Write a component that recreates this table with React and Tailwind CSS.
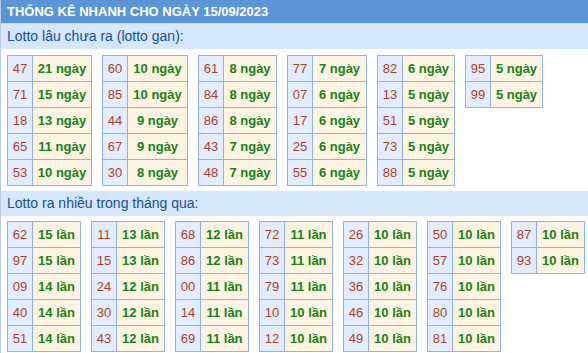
import React from "react";

const gan = [
  { w: 85, rows: [["47", "21"], ["71", "15"], ["18", "13"], ["65", "11"], ["53", "10"]] },
  { w: 86, rows: [["60", "10"], ["85", "10"], ["44", "9"], ["67", "9"], ["30", "8"]] },
  { w: 79, rows: [["61", "8"], ["84", "8"], ["86", "8"], ["43", "7"], ["48", "7"]] },
  { w: 80, rows: [["77", "7"], ["07", "6"], ["17", "6"], ["25", "6"], ["55", "6"]] },
  { w: 78, rows: [["82", "6"], ["13", "5"], ["51", "5"], ["73", "5"], ["88", "5"]] },
  { w: 78, rows: [["95", "5"], ["99", "5"]] },
];

const nhieu = [
  [["62", "15"], ["97", "15"], ["09", "14"], ["40", "14"], ["51", "14"]],
  [["11", "13"], ["15", "13"], ["24", "12"], ["30", "12"], ["43", "12"]],
  [["68", "12"], ["86", "12"], ["00", "11"], ["14", "11"], ["69", "11"]],
  [["72", "11"], ["73", "11"], ["79", "11"], ["10", "10"], ["12", "10"]],
  [["26", "10"], ["32", "10"], ["36", "10"], ["46", "10"], ["49", "10"]],
  [["50", "10"], ["57", "10"], ["76", "10"], ["80", "10"], ["81", "10"]],
  [["87", "10"], ["93", "10"]],
];

function Table({ width, rows, unit }) {
  return (
    <div
      className="border-l border-t border-[#8fb1ee] self-start shrink-0"
      style={{ width }}
    >
      {rows.map(([n, v], i) => (
        <div key={i} className="flex h-[26px]">
          <div className="w-[25px] shrink-0 border-r border-b border-[#8fb1ee] bg-[#e1edfd] text-[#b23e20] text-[13px] leading-[25px] text-center">
            {n}
          </div>
          <div className="flex-1 border-r border-b border-[#8fb1ee] bg-[#fdf3e3] text-[#148414] font-bold text-[13px] leading-[25px] text-center">
            {v} {unit}
          </div>
        </div>
      ))}
    </div>
  );
}

export default function App() {
  return (
    <div className="w-[588px] h-[353px] overflow-hidden bg-white border-l border-[#b9cbe3] font-['Liberation_Sans',Arial,sans-serif]">
      <div className="h-[24px] bg-[#5b95d7] border-b border-[#c9d9ec] text-white font-bold text-[13px] leading-[23px] pl-[6px]">
        THỐNG KÊ NHANH CHO NGÀY 15/09/2023
      </div>
      <div className="h-[25px] bg-[#d4e7fb] text-[#1b4d9d] text-[14px] leading-[25px] pl-[6px]">
        Lotto lâu chưa ra (lotto gan):
      </div>
      <div className="flex gap-[10px] pl-[6px] pt-[6px] h-[137px]">
        {gan.map((t, i) => (
          <Table key={i} width={t.w} rows={t.rows} unit="ngày" />
        ))}
      </div>
      <div className="mt-[5px] h-[25px] bg-[#d4e7fb] text-[#1b4d9d] text-[14px] leading-[25px] pl-[6px]">
        Lotto ra nhiều trong tháng qua:
      </div>
      <div className="flex gap-[10px] pl-[6px] pt-[5px]">
        {nhieu.map((rows, i) => (
          <Table key={i} width={74} rows={rows} unit="lần" />
        ))}
      </div>
    </div>
  );
}
